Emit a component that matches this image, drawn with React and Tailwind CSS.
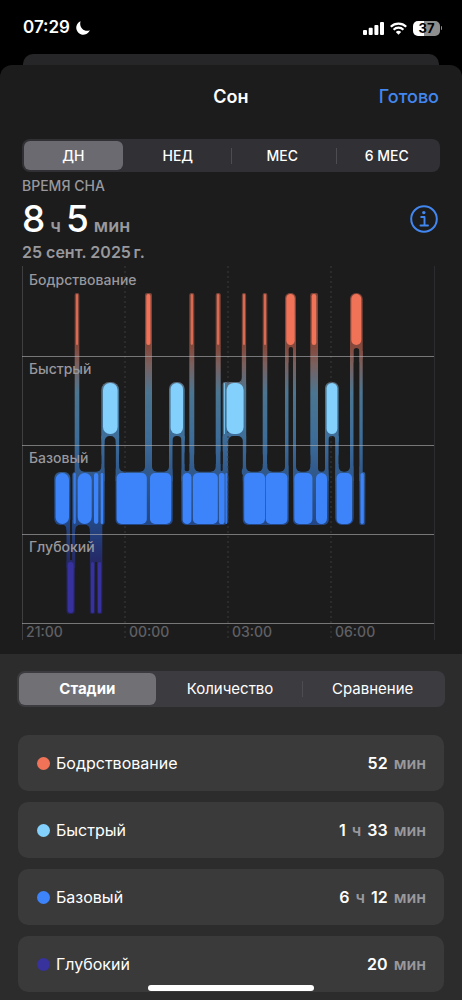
import { useState } from 'react';
import clsx from 'clsx';

const PERIODS = ['ДН', 'НЕД', 'МЕС', '6 МЕС'];
const TABS = ['Стадии', 'Количество', 'Сравнение'];

const STAGES = [
  { name: 'Бодрствование', dot: 'bg-[#f07358]', time: [['52', 'мин']] },
  { name: 'Быстрый', dot: 'bg-[#82d0fb]', time: [['1', 'ч'], ['33', 'мин']] },
  { name: 'Базовый', dot: 'bg-[#3d84fb]', time: [['6', 'ч'], ['12', 'мин']] },
  { name: 'Глубокий', dot: 'bg-[#37329c]', time: [['20', 'мин']] },
];

// Bars are [x1, x2] in chart units
const LANES = [
  {
    label: 'Бодрствование',
    fill: '#f07358',
    top: 28,
    bars: [[76, 78], [146.3, 150.5], [190.7, 193], [217, 219.3], [243, 245], [264, 266], [286.3, 294.7], [311.7, 316.3], [351.3, 361.3]],
  },
  {
    label: 'Быстрый',
    fill: '#82d0fb',
    top: 117,
    bars: [[103, 117.6], [170.6, 183], [223.9, 225], [226.6, 243.6], [326.6, 337.3]],
  },
  {
    label: 'Базовый',
    fill: '#3d84fb',
    top: 207,
    bars: [
      [55.6, 69], [73.5, 75.8], [77.7, 91.7], [94, 98.3], [100.7, 103.2], [116.7, 146.8], [150, 171.2],
      [182.7, 191.4], [192.9, 217.8], [218.9, 224.6], [225.4, 227.2], [244.2, 265], [265.7, 287.4],
      [294.3, 312.4], [316, 327], [336.6, 352], [360.5, 363.8],
    ],
  },
  {
    label: 'Глубокий',
    fill: '#37319d',
    top: 296,
    bars: [[67.6, 73.6], [91, 94], [98, 101.2]],
  },
];

const BAR_H = 51;

// Soft shells around runs of bars: [x, y, width, height, radius]
const SHELLS = [
  [74.7, 27, 4.6, 182, 2], [145, 27, 7, 182, 2], [189.3, 27, 5, 182, 2], [215.7, 27, 5, 182, 2],
  [241.8, 27, 4.3, 182, 2], [262.7, 27, 4.6, 182, 2], [310.3, 27, 7.7, 182, 2],
  [285, 27, 11, 70, 5], [350, 27, 12.7, 70, 6],
  [101.3, 116, 17.8, 64, 8], [169, 116, 15.7, 64, 7], [222.7, 116, 23.4, 64, 2], [325, 116, 13.7, 64, 6],
  [54.3, 206, 16, 53, 6], [72.3, 206, 32.4, 53, 3], [115.6, 206, 57.1, 53, 5], [181.3, 206, 47, 53, 5],
  [242.8, 206, 46, 53, 5], [293, 206, 35.7, 53, 5], [335.1, 206, 18.6, 53, 7], [359.3, 206, 6, 53, 2],
  [66.5, 294, 8.3, 54, 3], [89.9, 294, 5.2, 54, 2], [96.9, 294, 5.4, 54, 2],
];

// Thin legs that tie one lane to the next
const LEGS = [
  [101.3, 170, 3.4, 45], [115.6, 170, 3.5, 45], [169, 170, 3.7, 45], [181.3, 170, 3.4, 45],
  [222.7, 170, 5.5, 45], [242.8, 170, 3.3, 45], [325, 170, 3.7, 45], [335.1, 170, 3.6, 45],
  [285, 85, 3.7, 130], [293, 85, 3, 130], [350, 85, 3.7, 130], [359.2, 85, 3.5, 130],
  [66.5, 254, 3.5, 48], [72.1, 254, 3.1, 48], [89.9, 254, 12.4, 42],
];

// Strips of shell above the base lane; the hollows below cut them to round corners
const BANDS = [
  [79, 198, 23, 11], [118, 198, 52, 11], [184, 198, 40, 11], [245, 198, 41, 11],
  [295, 198, 31, 11], [338, 198, 13, 11], [75, 252, 15, 14],
];

const HOLLOWS = [
  [79.3, 185, 22, 20.7, 5], [119.1, 185, 25.9, 20.7, 5], [152, 185, 17, 20.7, 5], [184.7, 185, 4.6, 20.3, 2],
  [194.3, 185, 21.4, 20.7, 5], [220.7, 185, 2, 20, 1], [246.1, 185, 16.6, 20.7, 5], [267.3, 185, 17.7, 20.7, 5],
  [296, 185, 14.3, 20.7, 5], [318, 185, 7, 20.7, 3.5], [338.7, 185, 11.3, 20.7, 5],
  [104.7, 170, 10.9, 36, 5], [172.7, 170, 8.6, 36, 4], [228.2, 170, 14.6, 36, 5], [328.7, 170, 6.4, 36, 3],
  [288.7, 81, 4.3, 120, 2], [353.7, 82, 5.5, 120, 2.7],
  [75.3, 258.7, 14.5, 28, 5],
];

function Segmented({ items, value, onChange, className, selectedClassName }) {
  const active = items.indexOf(value);
  return (
    <div className={clsx('flex rounded-lg py-0.5', className)}>
      {items.map((item, i) => (
        <div key={item} className="flex flex-1 items-center">
          <span className={clsx('h-4 w-px', i > 0 && i !== active && i !== active + 1 && 'bg-[#4c4c51]')} />
          <button
            type="button"
            aria-pressed={i === active}
            onClick={() => onChange(item)}
            className={clsx('mr-1 ml-px h-full flex-1 rounded-md', i === active && selectedClassName)}
          >
            {item}
          </button>
        </div>
      ))}
    </div>
  );
}

function StatusBar() {
  return (
    <div className="flex h-[54px] items-center justify-between pt-0.5 pr-5 pl-[23px]">
      <div className="flex items-center gap-1.5 text-[17px] font-semibold">
        <span>07:29</span>
        <svg viewBox="0 0 14 14" className="size-3.5" fill="#fff" aria-hidden="true">
          <path d="M4.6.2A7 7 0 1 0 13.8 9.2C8.4 11.6 2.6 6.4 4.6.2Z" />
        </svg>
      </div>
      <div className="flex items-center gap-1.5">
        <svg viewBox="0 0 21 13" className="h-[13px] w-[21px]" fill="#fff" aria-hidden="true">
          <rect x="0" y="8" width="4" height="5" rx="1" />
          <rect x="5.7" y="5.8" width="4" height="7.2" rx="1" />
          <rect x="11.4" y="3" width="4" height="10" rx="1" />
          <rect x="17" y="0" width="4" height="13" rx="1" />
        </svg>
        <svg viewBox="0 0 17 13" className="h-[13px] w-[17px]" aria-hidden="true">
          <g fill="none" stroke="#fff" strokeWidth="2.2">
            <path d="M.8 4.7a11 11 0 0 1 15.4 0" />
            <path d="M3.6 7.7a7 7 0 0 1 9.8 0" />
          </g>
          <path d="M8.5 12.8 5.8 10a3.9 3.9 0 0 1 5.4 0Z" fill="#fff" />
        </svg>
        <div className="flex items-center gap-px">
          <div className="flex h-[15px] w-[27px] items-center justify-center rounded-[5px] bg-linear-to-r from-white from-40% to-[#8e8e8e] to-40% text-[13px] leading-[15px] font-bold text-black">
            37
          </div>
          <span className="h-1 w-px rounded-r bg-[#8e8e8e]" />
        </div>
      </div>
    </div>
  );
}

function SleepChart() {
  return (
    <svg viewBox="0 0 462 374" className="block w-full" role="img" aria-label="Стадии сна">
      <defs>
        <linearGradient id="shell" gradientUnits="userSpaceOnUse" x1="0" y1="27" x2="0" y2="348">
          <stop offset="0" stopColor="#7c4337" />
          <stop offset="0.17" stopColor="#84493d" />
          <stop offset="0.22" stopColor="#7b5f5d" />
          <stop offset="0.31" stopColor="#4b7590" />
          <stop offset="0.45" stopColor="#3d6d99" />
          <stop offset="0.56" stopColor="#31598c" />
          <stop offset="0.72" stopColor="#234784" />
          <stop offset="0.83" stopColor="#252a68" />
          <stop offset="1" stopColor="#242159" />
        </linearGradient>
      </defs>

      <g fill="url(#shell)">
        {SHELLS.map(([x, y, w, h, r]) => (
          <rect key={`${x}-${y}`} x={x} y={y} width={w} height={h} rx={r} />
        ))}
        {LEGS.concat(BANDS).map(([x, y, w, h]) => (
          <rect key={`${x}-${y}`} x={x} y={y} width={w} height={h} />
        ))}
        <path d="M237 116.5Q241.8 116 241.8 111V118H237ZM62 258.6Q66.5 259 66.5 264H68V256H62Z" />
      </g>
      <g fill="#1c1c1c">
        {HOLLOWS.map(([x, y, w, h, r]) => (
          <rect key={`${x}-${y}`} x={x} y={y} width={w} height={h} rx={r} />
        ))}
      </g>

      {/* Grid */}
      <path d="M22.5 0V374" stroke="#3f3f42" />
      <path d="M434.5 0V374" stroke="#2c2c30" />
      <path d="M125 0V374M228 0V374M331 0V374" stroke="#3a3a3d" strokeDasharray="2 3" />

      {LANES.map((lane) => (
        <g key={lane.label} fill={lane.fill}>
          {lane.bars.map(([x1, x2]) => (
            <rect
              key={x1}
              x={x1}
              y={lane.top}
              width={x2 - x1}
              height={BAR_H}
              rx={Math.min((x2 - x1) / 2, x2 - x1 > 15 && lane.top === 207 ? 5 : 7)}
              opacity={x2 - x1 < 2.5 ? 0.8 : 1}
            />
          ))}
        </g>
      ))}

      <path d="M22 90.5H434M22 179.5H434M22 268.5H434M22 357.5H434" stroke="#b4b4b8" strokeOpacity="0.6" />

      <g fill="#98989d" fontSize="14" fontWeight="500">
        {LANES.map((lane, i) => (
          <text key={lane.label} x="29" y={19 + i * 89}>
            {lane.label}
          </text>
        ))}
      </g>
      <g fill="#606064" fontSize="14" fontWeight="500">
        {['21:00', '00:00', '03:00', '06:00'].map((hour, i) => (
          <text key={hour} x={26 + i * 103} y="371">
            {hour}
          </text>
        ))}
      </g>
    </svg>
  );
}

function StageRow({ stage }) {
  return (
    <li className="flex h-14 items-center rounded-[10px] bg-[#3a3a3a] pr-[18px] pl-[19px] text-[16px]">
      <span className={clsx('mr-1.5 size-[13px] rounded-full', stage.dot)} />
      <span className="flex-1">{stage.name}</span>
      <span className="flex gap-1.5 font-semibold">
        {stage.time.map(([value, unit]) => (
          <span key={unit} className="flex gap-1.5">
            {value} <span className="text-[#98989d]">{unit}</span>
          </span>
        ))}
      </span>
    </li>
  );
}

export default function App() {
  const [period, setPeriod] = useState('ДН');
  const [tab, setTab] = useState('Стадии');

  return (
    <div className="flex min-h-screen flex-col bg-black font-['Inter','Liberation_Sans',sans-serif] text-white">
      <StatusBar />
      <div className="mx-[23px] h-[11px] rounded-t-[10px] bg-[#262628]" />

      <main className="flex flex-1 flex-col rounded-t-xl bg-[#1c1c1c]">
        <header className="grid h-[62px] grid-cols-3 items-center px-[23px] text-[18px] font-semibold">
          <h1 className="col-start-2 text-center">Сон</h1>
          <button type="button" className="justify-self-end font-medium text-[#4287f0]">
            Готово
          </button>
        </header>

        <section className="mt-3 px-[22px]">
          <Segmented
            items={PERIODS}
            value={period}
            onChange={setPeriod}
            className="h-[33px] bg-[#313035] text-[14px] font-medium"
            selectedClassName="bg-[#6b6a70]"
          />
          <p className="mt-1 text-[14px] leading-5 font-medium text-[#98989d]">ВРЕМЯ СНА</p>
          <div className="flex items-center justify-between">
            <p className="flex items-baseline gap-[5px] text-[37px] leading-[46px] font-medium">
              8 <span className="text-[18px] leading-5 font-semibold text-[#98989d]">ч</span>
              5 <span className="text-[18px] leading-5 font-semibold text-[#98989d]">мин</span>
            </p>
            <button type="button" aria-label="Сведения" className="mr-0.5">
              <svg viewBox="0 0 28 28" className="size-7" fill="none" stroke="#4287f0">
                <circle cx="14" cy="14" r="12.8" strokeWidth="2" />
                <circle cx="13.8" cy="7.6" r="1.7" fill="#4287f0" stroke="none" />
                <path d="M11.2 12H14.5V20.3M10.5 20.5H18" strokeWidth="1.9" strokeLinecap="round" strokeLinejoin="round" />
              </svg>
            </button>
          </div>
          <p className="text-[16px] leading-5 font-semibold text-[#98989d]">25 сент. 2025&thinsp;г.</p>
        </section>

        <div className="mt-1 mb-3.5">
          <SleepChart />
        </div>

        <section className="flex-1 bg-[#2c2c2c] px-[17px] pt-[17px] pb-[9px]">
          <Segmented
            items={TABS}
            value={tab}
            onChange={setTab}
            className="h-9 bg-[#3c3b40] text-[15px]"
            selectedClassName="bg-[#717075] font-bold"
          />
          <ul className="mt-7 flex flex-col gap-[11px] px-px">
            {STAGES.map((stage) => (
              <StageRow key={stage.name} stage={stage} />
            ))}
          </ul>
        </section>
      </main>

      {/* Home indicator */}
      <div className="fixed bottom-[9px] left-1/2 h-1.5 w-[166px] -translate-x-1/2 rounded-full bg-white" />
    </div>
  );
}
